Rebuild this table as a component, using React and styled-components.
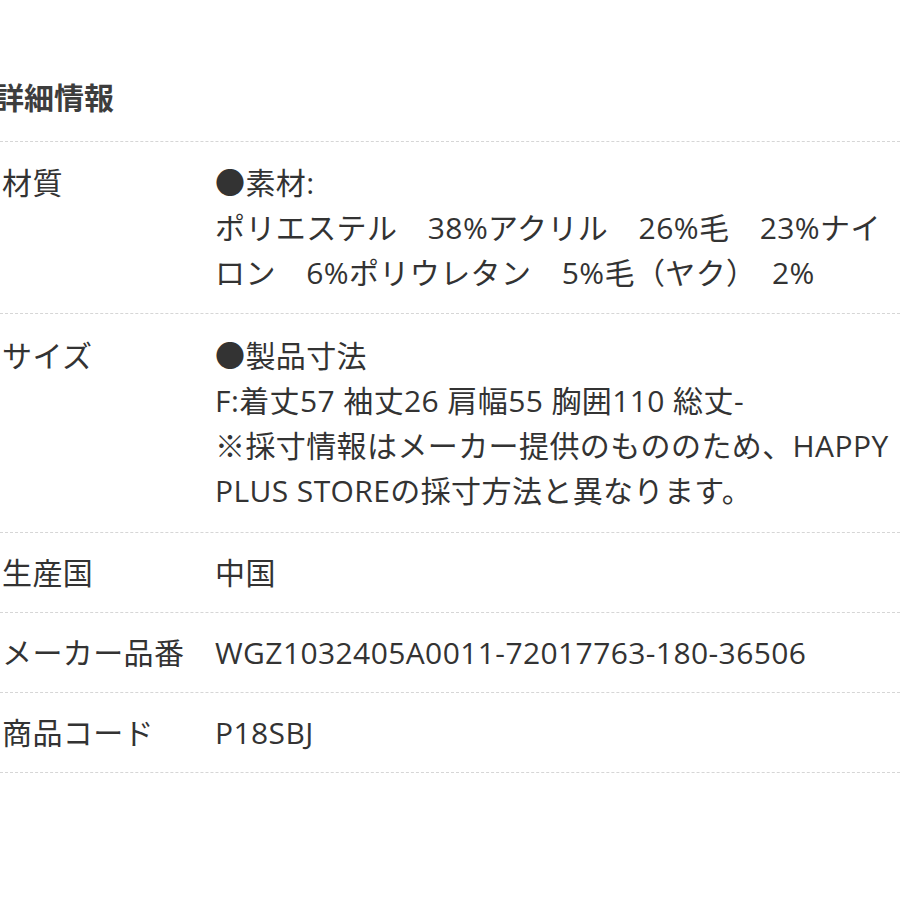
import React from "react";
import styled, { createGlobalStyle } from "styled-components";

const GlobalStyle = createGlobalStyle`
  html, body {
    margin: 0;
    padding: 0;
    background: #fff;
    overflow: hidden;
  }
  body {
    font-family: "Open Sans", "Noto Sans CJK JP", sans-serif;
    color: #333;
  }
`;

const details = [
  {
    label: "材質",
    lines: [
      "●素材:",
      "ポリエステル　38%アクリル　26%毛　23%ナイ",
      "ロン　6%ポリウレタン　5%毛（ヤク）　2%"
    ]
  },
  {
    label: "サイズ",
    lines: [
      "●製品寸法",
      "F:着丈57 袖丈26 肩幅55 胸囲110 総丈-",
      "※採寸情報はメーカー提供のもののため、HAPPY",
      "PLUS STOREの採寸方法と異なります。"
    ]
  },
  { label: "生産国", lines: ["中国"] },
  { label: "メーカー品番", lines: ["WGZ1032405A0011-72017763-180-36506"] },
  { label: "商品コード", lines: ["P18SBJ"] }
];

// vertical padding grows a little with the number of lines
const padFor = (n) => (n > 3 ? 19 : n > 1 ? 18 : 17);

class App extends React.Component {
  render() {
    return (
      <Page>
        <GlobalStyle />
        <Title>詳細情報</Title>
        <Table>
          {details.map((row, i) => (
            <Row key={i} pad={padFor(row.lines.length)}>
              <Label>{row.label}</Label>
              <Value>
                {row.lines.map((line, j) => (
                  <Line key={j}>{line}</Line>
                ))}
              </Value>
            </Row>
          ))}
        </Table>
      </Page>
    );
  }
}

const Page = styled.div`
  width: 900px;
  height: 900px;
  overflow: hidden;
  background: #fff;
`;

const Title = styled.h2`
  margin: 0;
  padding: 74px 0 22px;
  text-indent: -6px;
  font-family: "Noto Sans CJK JP", sans-serif;
  font-size: 30px;
  font-weight: 700;
  line-height: 45px;
  color: #3d3d3d;
  border-bottom: 1.5px dashed #d6d6d6;
`;

const Table = styled.div`
  display: flex;
  flex-direction: column;
`;

const Row = styled.div.withConfig({
  shouldForwardProp: (prop) => prop !== "pad"
})`
  display: grid;
  grid-template-columns: 215px 1fr;
  padding: ${(p) => p.pad}px 0;
  border-bottom: 1.5px dashed #d6d6d6;
  font-size: 30px;
  line-height: 45px;
  letter-spacing: 0.4px;
`;

const Label = styled.div`
  padding-left: 2px;
  white-space: nowrap;
`;

const Value = styled.div`
  display: flex;
  flex-direction: column;
`;

const Line = styled.span`
  white-space: nowrap;
`;

export default App;
